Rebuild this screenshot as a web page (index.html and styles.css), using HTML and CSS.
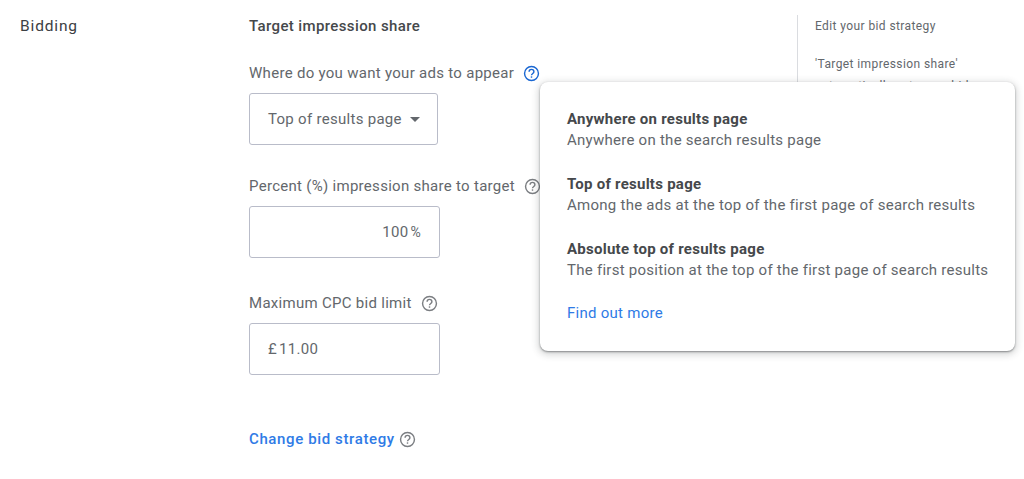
FILE: index.html
```html
<!DOCTYPE html>
<html lang="en">
<head>
<meta charset="utf-8">
<title>Bidding</title>
<link rel="stylesheet" href="styles.css">
</head>
<body>
<svg class="defs" width="0" height="0" aria-hidden="true">
  <symbol id="help" viewBox="0 0 24 24">
    <circle cx="12" cy="12" r="9.8" fill="none" stroke="currentColor" stroke-width="2"/>
    <path d="M8.6 9.6a3.4 3.4 0 0 1 6.8 0c0 2.3-3.4 2.4-3.4 5" fill="none" stroke="currentColor" stroke-width="2"/>
    <rect x="11" y="16" width="2" height="2" fill="currentColor"/>
  </symbol>
</svg>
<div class="page">
  <div class="section-title">Bidding</div>
  <main class="form">
    <h2 class="form-title">Target impression share</h2>
    <div class="field field-appear">
      <div class="label">Where do you want your ads to appear<svg class="help help-active"><use href="#help"/></svg></div>
      <div class="box box-select"><span>Top of results page</span><span class="caret"></span></div>
    </div>
    <div class="field field-percent">
      <div class="label">Percent (%) impression share to target<svg class="help"><use href="#help"/></svg></div>
      <div class="box box-percent">100<span class="unit">%</span></div>
    </div>
    <div class="field field-cpc">
      <div class="label">Maximum CPC bid limit<svg class="help help-wide"><use href="#help"/></svg></div>
      <div class="box box-cpc"><span class="unit-left">£</span>11.00</div>
    </div>
    <div class="change"><a class="link link-strong">Change bid strategy</a><svg class="help help-change"><use href="#help"/></svg></div>
  </main>
  <aside class="side">
    <p class="side-head">Edit your bid strategy</p>
    <p class="side-text">'Target impression share'<br>automatically sets your bids</p>
  </aside>
</div>
<div class="popover">
  <div class="option"><div class="option-name">Anywhere on results page</div><div>Anywhere on the search results page</div></div>
  <div class="option"><div class="option-name">Top of results page</div><div>Among the ads at the top of the first page of search results</div></div>
  <div class="option"><div class="option-name">Absolute top of results page</div><div>The first position at the top of the first page of search results</div></div>
  <a class="link">Find out more</a>
</div>
</body>
</html>
```
FILE: styles.css
```css
* { box-sizing: border-box; }
html, body { margin: 0; height: 479px; overflow: hidden; background: #fff; }
body { font-family: Roboto, "Liberation Sans", sans-serif; font-size: 15px; line-height: 22px; color: #63676c; letter-spacing: .29px; }
.defs { position: absolute; }
.page { display: grid; grid-template-columns: 229px 548px 1fr; padding: 15px 0 0 20px; height: 479px; }
.section-title { color: #3c4043; font-size: 15.5px; letter-spacing: .85px; }
.form-title { margin: 0; font-size: 15px; font-weight: 500; color: #45484b; letter-spacing: .38px; }
.field-appear { margin-top: 25px; }
.field-percent { margin-top: 30px; }
.field-cpc { margin-top: 34px; }
.label { display: flex; align-items: center; height: 22px; }
.help { width: 17px; height: 17px; margin-left: 9px; color: #7b7e82; flex: none; }
.help-active { color: #1a67d2; }
.help-wide { margin-left: 9px; }
.help-change { margin-left: 4px; }
.box { border: 1px solid #b9bcc9; border-radius: 3px; height: 52px; margin-top: 9px; display: flex; align-items: center; background: #fff; }
.box-select { width: 189px; padding-left: 18px; }
.caret { width: 0; height: 0; border: 5.5px solid transparent; border-top-color: #63676c; border-bottom: 0; margin-left: 8px; }
.box-percent { width: 191px; justify-content: flex-end; padding-right: 18px; }
.box-cpc { width: 191px; padding-left: 18px; }
.unit { margin-left: 2px; font-size: 14px; }
.unit-left { margin-right: 2px; }
.change { display: flex; align-items: center; margin-top: 53px; }
.link { color: #2f7be6; }
.link-strong { font-weight: 500; letter-spacing: .62px; }
.side { border-left: 1px solid #dadce0; padding-left: 17px; font-size: 12px; letter-spacing: .4px; height: 200px; }
.side-head, .side-text { margin: 0; line-height: 22px; }
.side-text { margin-top: 16px; }
.popover { position: absolute; left: 540px; top: 82px; width: 475px; height: 269px; padding: 25px 26px 0 27px; background: #fff; border-radius: 8px; box-shadow: 0 1px 2px rgba(60,64,67,.55), 0 2px 7px 2px rgba(60,64,67,.2); white-space: nowrap; letter-spacing: .26px; }
.popover > .link { letter-spacing: .27px; }
.option { margin-bottom: 21px; }
.option-name { font-weight: 700; color: #45484b; letter-spacing: .26px; position: relative; top: 1px; }
```
